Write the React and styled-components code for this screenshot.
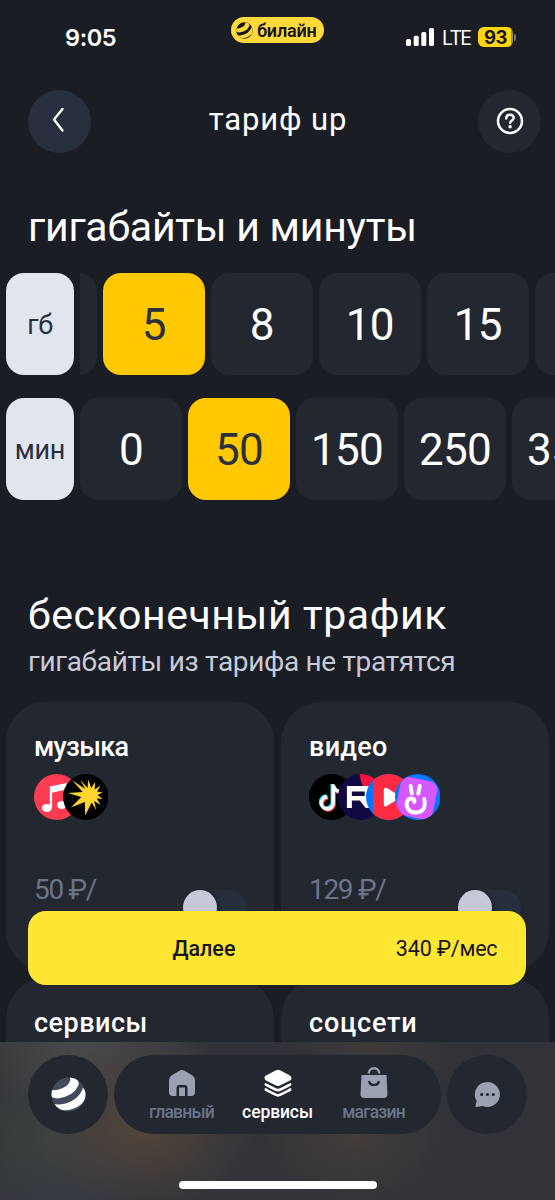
import styled, {createGlobalStyle} from "styled-components";

const GlobalStyle = createGlobalStyle`
    * {
        box-sizing: border-box;
    }

    body {
        margin: 0;
        background-color: #1b1d24;
        font-family: Roboto, "Liberation Sans", sans-serif;
    }

    button {
        border: 0;
        padding: 0;
        font-family: inherit;
    }
`;

const Screen = styled.div`
    position: relative;
    width: 555px;
    height: 1200px;
    overflow: hidden;
    color: #fff;
    background-color: #1b1d24;
`;

const StatusBar = styled.div`
    display: grid;
    grid-template-columns: 231px 93px 1fr;
    height: 89.5px;
    padding-top: 17px;
`;

const Clock = styled.div`
    padding: 6px 0 0 65px;
    font-family: Inter, sans-serif;
    font-size: 23.5px;
    line-height: 29px;
    font-weight: 600;
    letter-spacing: -0.4px;
`;

const OperatorPill = styled.div`
    display: flex;
    align-items: center;
    gap: 4px;
    height: 26px;
    padding-left: 5px;
    border-radius: 13px;
    color: #15171c;
    background-color: #ffd83a;
    font-size: 18px;
    font-weight: 600;
    letter-spacing: -0.2px;
    white-space: nowrap;
`;

const Indicators = styled.div`
    display: flex;
    align-items: flex-start;
    padding: 10px 0 0 82px;
`;

const Network = styled.span`
    width: 28px;
    margin: 0 8px 0 7px;
    font-family: Inter, sans-serif;
    font-size: 19.5px;
    line-height: 22px;
    letter-spacing: -1.7px;
`;

const Battery = styled.span`
    display: flex;
    justify-content: center;
    width: 35px;
    height: 20px;
    border-radius: 6px;
    color: #15171c;
    background: linear-gradient(to right, #ffd60a 94%, #9a8f62 94%);
    font-family: Inter, sans-serif;
    font-size: 18.5px;
    line-height: 20px;
    font-weight: 700;
    letter-spacing: -0.5px;
`;

const BatteryTip = styled.span`
    width: 2px;
    height: 7px;
    margin: 7px 0 0 1px;
    border-radius: 0 2px 2px 0;
    background-color: #777a80;
`;

const Header = styled.header`
    display: flex;
    align-items: center;
    justify-content: space-between;
    height: 63px;
    padding: 0 14px 0 28px;
`;

const RoundButton = styled.button`
    display: flex;
    align-items: center;
    justify-content: center;
    width: 63px;
    height: 63px;
    border-radius: 50%;
    color: #fff;
    background-color: ${p => p.$light ? "#282f3e" : "#232730"};
`;

const Title = styled.h1`
    margin: 0 0 3px -13px;
    font-size: 31px;
    line-height: 36px;
    font-weight: 400;
    letter-spacing: 0.9px;
`;

const Heading = styled.h2`
    margin: ${p => p.$top}px 0 0 28px;
    font-size: 41px;
    line-height: 48px;
    font-weight: 400;
    letter-spacing: ${p => p.$spacing}px;
    white-space: nowrap;
`;

const Subheading = styled.p`
    margin: 5px 0 0 28px;
    font-size: 28px;
    line-height: 36px;
    color: #c6cad8;
    letter-spacing: -0.33px;
`;

const Picker = styled.div`
    display: flex;
    gap: 6px;
    height: 102px;
    margin-top: ${p => p.$top}px;
    padding-left: 6px;
`;

const Unit = styled.div`
    flex: none;
    display: flex;
    align-items: center;
    justify-content: center;
    width: 68px;
    padding-top: 1px;
    border-radius: 18px;
    color: #2a303e;
    background-color: #e1e5ee;
    font-size: 27px;
    letter-spacing: -0.3px;
`;

const Options = styled.div`
    flex: 1;
    display: flex;
    gap: 6px;
    overflow: hidden;
`;

const Option = styled.button`
    flex: none;
    width: 102px;
    margin-left: ${p => p.$shift || 0}px;
    padding-top: 1px;
    border-radius: 18px;
    color: ${p => p.$selected ? "#2a303e" : "#fff"};
    background-color: ${p => p.$selected ? "#ffc800" : "#232730"};
    font-size: 44px;
    letter-spacing: -0.8px;
`;

const Cards = styled.div`
    display: grid;
    grid-template-columns: 268px 268px;
    grid-auto-rows: 269px;
    gap: 7px;
    margin-top: 22px;
    padding-left: 6px;
`;

const Card = styled.section`
    display: flex;
    flex-direction: column;
    padding: 28px 28px 0;
    border-radius: 40px;
    background-color: #232730;
`;

const CardTitle = styled.h3`
    margin: 0;
    font-size: 27px;
    line-height: 34px;
    font-weight: 500;
    letter-spacing: ${p => p.$spacing}px;
`;

const Badges = styled.div`
    display: flex;
    height: 46px;
    margin-top: 10px;

    svg {
        flex: none;
        margin-right: -16.9px;
    }
`;

const CardFooter = styled.div`
    display: flex;
    justify-content: space-between;
    margin-top: 53px;
`;

const Price = styled.span`
    font-size: 28px;
    line-height: 33px;
    color: #6c7489;
    letter-spacing: -1.3px;
`;

const Toggle = styled.span`
    width: 63px;
    height: 35px;
    margin-top: 17px;
    border-radius: 18px;
    background-color: #272e3d;

    &::before {
        content: "";
        display: block;
        width: 34px;
        height: 35px;
        border-radius: 50%;
        background-color: #c6cad8;
        box-shadow: 2px 1px 4px rgba(0, 0, 0, 0.35);
    }
`;

const NextButton = styled.button`
    position: absolute;
    left: 28.4px;
    top: 911px;
    display: grid;
    grid-template-columns: 351px 1fr;
    align-items: center;
    width: 498px;
    height: 74px;
    padding-right: 29px;
    border-radius: 18px;
    color: #15171c;
    background-color: #ffe633;
    font-size: 21.5px;
`;

const NextLabel = styled.span`
    font-weight: 500;
`;

const Total = styled.span`
    text-align: right;
    white-space: nowrap;
    letter-spacing: -0.2px;
`;

const TabBar = styled.nav`
    position: absolute;
    left: 0;
    right: 0;
    bottom: 0;
    display: flex;
    flex-direction: column;
    align-items: center;
    height: 158px;
    padding-top: 13px;
    background:
        radial-gradient(ellipse 110px 90px at 145px 82px, #54463b, transparent),
        radial-gradient(ellipse 130px 70px at 80px 0, #4b4b4b, transparent),
        radial-gradient(ellipse 100px 90px at 50px 95px, #3b4241, transparent),
        radial-gradient(ellipse 90px 70px at 355px 92px, #443d39, transparent),
        radial-gradient(ellipse 80px 60px at 370px 0, #3e3a39, transparent),
        radial-gradient(ellipse 90px 60px at 75px 158px, #333744, transparent),
        #323338;
`;

const TabRow = styled.div`
    display: flex;
    gap: 6px;
    height: 79px;
`;

const TabCircle = styled.button`
    display: flex;
    align-items: center;
    justify-content: center;
    width: 80px;
    height: 79px;
    border-radius: 50%;
    background-color: #232730;
`;

const TabGroup = styled.div`
    display: flex;
    justify-content: center;
    width: 327px;
    border-radius: 40px;
    background-color: #232730;
`;

const Tab = styled.button`
    display: flex;
    flex-direction: column;
    align-items: center;
    width: 96px;
    padding-top: 13px;
    color: ${p => p.$active ? "#fff" : "#6c7489"};
    background: none;
    font-size: 17.5px;
    line-height: 21px;
    font-weight: 500;
    letter-spacing: ${p => p.$active ? -0.1 : -0.8}px;

    svg {
        margin-bottom: 4px;
        color: ${p => p.$active ? "#fff" : "#9ba1b2"};
    }
`;

const HomeIndicator = styled.div`
    width: 198px;
    height: 8px;
    margin-top: 47px;
    border-radius: 4px;
    background-color: #fff;
`;

const BeeLogo = ({size, ball, stripe}) => (
    <svg width={size} height={size} viewBox="0 0 36 36">
        <defs>
            <clipPath id={`ball-${size}`}><circle cx="18" cy="18" r="17.5"/></clipPath>
        </defs>
        <g clipPath={`url(#ball-${size})`}>
            <rect width="36" height="36" fill={ball}/>
            <path d="M0 13Q3 14 7 13Q19 10 20 2L19 0L25 1Q30 5 28 9Q23 20 7 22Q3 22 0 20Z" fill={stripe}/>
            <path d="M1 27Q5 29 11 28Q28 25 33 11L37 17Q35 29 22 33Q13 36 5 32Z" fill={stripe}/>
        </g>
    </svg>
);

const SignalIcon = () => (
    <svg width="29" height="19" viewBox="0 0 29 19" fill="#fff">
        <rect x="0" y="12" width="5" height="7" rx="1.5"/>
        <rect x="7.7" y="8.7" width="5" height="10.3" rx="1.5"/>
        <rect x="15.3" y="5" width="5" height="14" rx="1.5"/>
        <rect x="23" y="1" width="5" height="18" rx="1.5"/>
    </svg>
);

const BackIcon = () => (
    <svg width="16" height="28" viewBox="0 0 16 28" fill="none" stroke="currentColor" strokeWidth="2.4"
         strokeLinecap="round" strokeLinejoin="round">
        <path d="M10.5 2L2 12.5L10.5 23.5"/>
    </svg>
);

const HelpIcon = () => (
    <svg width="28" height="28" viewBox="0 0 28 28" fill="none" stroke="currentColor" strokeWidth="2.5"
         strokeLinecap="round">
        <circle cx="14" cy="14" r="12"/>
        <path d="M10.2 11.5C10.2 6.3 18 6.7 17.7 11C17.5 13.6 14.1 13.4 14.1 16"/>
        <circle cx="14.1" cy="19.8" r="1.7" fill="currentColor" stroke="none"/>
    </svg>
);

const Badge = ({fill, children, name}) => (
    <svg width="45.5" height="46" viewBox="0 0 46 46" preserveAspectRatio="none">
        <defs>
            <clipPath id={`badge-${name}`}><circle cx="23" cy="23" r="23"/></clipPath>
        </defs>
        <g clipPath={`url(#badge-${name})`}>
            <rect width="46" height="46" fill={fill}/>
            {children}
        </g>
    </svg>
);

const AppleMusic = () => (
    <Badge name="music" fill="#fc3c53">
        <path d="M16 12.5L33 9V31H30.5V16L18.3 18.8V34H16Z" fill="#fff"/>
        <ellipse cx="13" cy="34" rx="5" ry="4" fill="#fff"/>
        <ellipse cx="28" cy="31" rx="4.7" ry="4" fill="#fff"/>
    </Badge>
);

const Zvuk = () => (
    <Badge name="zvuk" fill="#000">
        <path
            d="M5 19L20 18L9.5 6.5L22.5 15L17.5 6L24.8 14L25.5 5.5L28.5 14L32.5 8L32 15.500L38 11.5L34.5 17.5L40 18.5L35 21L40 25L34 24.5L38 31L31.5 27L33.5 36L29 28.5L22.5 41.5L22 28L8 33.5L18.5 23Z"
            fill="#ffd52e"/>
    </Badge>
);

const TikTok = () => (
    <Badge name="tiktok" fill="#000">
        <g fill="none" strokeWidth="3.4">
            <path d="M23.5 10V27.5A6 6 0 1 1 17.5 22M23.5 11Q24.5 16 30 17" stroke="#25f4ee"/>
            <path d="M25.5 12V29A6 6 0 1 1 19.5 24M25.5 12Q26 18 32 19" stroke="#fe2c55"/>
            <path d="M24.5 10.5V28.3A6 6 0 1 1 18.5 23M24.5 11Q25.5 16.5 31.5 18" stroke="#fff"/>
        </g>
    </Badge>
);

const Rutube = () => (
    <Badge name="rutube" fill="#100943">
        <path d="M22 0H46V23Q24 23 22 0Z" fill="#f41240"/>
        <path d="M9 12H29Q33 12 33 16V22Q33 26 29 26.5L34 34H28L22 26.500H14V34H9ZM14 17.500V22H27V17.500Z" fill="#fff"
              fillRule="evenodd"/>
    </Badge>
);

const VkVideo = () => (
    <Badge name="vkvideo" fill="#0077ff">
        <rect x="7" y="-2" width="50" height="50" rx="9" fill="#ff2b42"/>
        <path d="M18 16Q18 13 21 14L31 20Q34 23 31 26L21 32Q18 34 18 30Z" fill="#fff"/>
    </Badge>
);

const VkClips = () => (
    <Badge name="clips" fill="#0077ff">
        <rect x="3" y="5" width="38" height="39" rx="9" transform="rotate(12 23 24)" fill="#d457ff"/>
        <g fill="none" stroke="#fff" strokeWidth="4" strokeLinecap="round">
            <path d="M15.8 12L17 19.5M25 12L23.5 19.5"/>
            <path d="M19.5 28Q20.5 24.5 16.5 24.5C11 25 10.5 32 14 36C18 40 27 39.5 29.5 33.5Q31 29 29.5 25"/>
        </g>
    </Badge>
);

const HomeIcon = () => (
    <svg width="30" height="30" viewBox="0 0 30 30" fill="currentColor">
        <path
            d="M12.5 2.7Q15 1.2 17.5 2.7L25.5 7.5Q28 9 28 12V24Q28 28 24 28H20.5V20Q20.5 17 17.5 17H12.5Q9.5 17 9.5 20V28H6Q2 28 2 24V12Q2 9 4.5 7.5Z"/>
        <rect x="12" y="19.5" width="6" height="8.5"/>
    </svg>
);

const LayersIcon = () => (
    <svg width="30" height="30" viewBox="0 0 30 30" fill="currentColor">
        <path
            d="M12.5 2.5Q15 1 17.5 2.5L26.5 7.2Q28.5 8.5 28.5 10.5T26.5 12.7L17.5 17.3Q15 18.6 12.5 17.3L3.5 12.7Q1.5 11.5 1.5 10V9.5Q1.5 8.2 3.5 7.2Z"/>
        <g fill="none" stroke="currentColor" strokeWidth="2.6" strokeLinecap="round">
            <path d="M2.8 16.3Q3.5 17 4.5 17.5L12.5 21.5Q15 22.8 17.5 21.5L25.5 17.5Q26.5 17 27.2 16.3"/>
            <path d="M2.8 21.5Q3.5 22.2 4.5 22.7L12.5 26.7Q15 28 17.5 26.7L25.5 22.7Q26.5 22.2 27.2 21.5"/>
        </g>
    </svg>
);

const BagIcon = () => (
    <svg width="30" height="30" viewBox="0 -1 30 30" overflow="visible">
        <path d="M9.7 4.5A5.3 5.3 0 0 1 20.3 4.5" fill="none" stroke="currentColor" strokeWidth="2.4"/>
        <path d="M2.5 6H27.5L28.5 25Q28.5 29 24.5 29H5.5Q1.5 29 1.5 25Z" fill="currentColor"/>
        <path d="M10 12Q10.5 16 15 16Q19.5 16 20 12" fill="none" stroke="#232730" strokeWidth="2.2"/>
    </svg>
);

const ChatIcon = () => (
    <svg width="27" height="27" viewBox="0 0 27 27">
        <path d="M13.5 1A12.5 12.5 0 1 1 8.5 25L2.5 26Q1 26 1.5 24.5L2.7 20A12.5 12.5 0 0 1 13.5 1Z"
              fill="#9ba1b2"/>
        <g fill="#232730">
            <circle cx="7.7" cy="13.5" r="1.6"/>
            <circle cx="13.5" cy="13.5" r="1.6"/>
            <circle cx="19.3" cy="13.5" r="1.6"/>
        </g>
    </svg>
);

const cards = [
    {title: "музыка", spacing: -0.7, price: "50 ₽/", badges: [AppleMusic, Zvuk]},
    {title: "видео", spacing: 0.3, price: "129 ₽/", badges: [TikTok, Rutube, VkVideo, VkClips]},
    {title: "сервисы", spacing: 0.5, badges: []},
    {title: "соцсети", spacing: 0.8, badges: []},
];

const tabs = [
    {name: "главный", icon: HomeIcon},
    {name: "сервисы", icon: LayersIcon, active: true},
    {name: "магазин", icon: BagIcon},
];

const App = () => {
    return (
        <>
            <GlobalStyle/>
            <Screen>
                <StatusBar>
                    <Clock>9:05</Clock>
                    <OperatorPill>
                        <BeeLogo size={17} ball="#15171c" stripe="#ffd83a"/>
                        билайн
                    </OperatorPill>
                    <Indicators>
                        <SignalIcon/>
                        <Network>LTE</Network>
                        <Battery>93</Battery>
                        <BatteryTip/>
                    </Indicators>
                </StatusBar>
                <Header>
                    <RoundButton $light><BackIcon/></RoundButton>
                    <Title>тариф up</Title>
                    <RoundButton><HelpIcon/></RoundButton>
                </Header>
                <Heading $top={50.5} $spacing={-0.25}>гигабайты и минуты</Heading>
                <Picker $top={22}>
                    <Unit>гб</Unit>
                    <Options>
                        <Option $shift={-85.3}/>
                        <Option $selected>5</Option>
                        <Option>8</Option>
                        <Option>10</Option>
                        <Option>15</Option>
                        <Option/>
                    </Options>
                </Picker>
                <Picker $top={23}>
                    <Unit>мин</Unit>
                    <Options>
                        <Option>0</Option>
                        <Option $selected>50</Option>
                        <Option>150</Option>
                        <Option>250</Option>
                        <Option>350</Option>
                    </Options>
                </Picker>
                <Heading $top={91} $spacing={0.58}>бесконечный трафик</Heading>
                <Subheading>гигабайты из тарифа не тратятся</Subheading>
                <Cards>
                    {cards.map(card => (
                        <Card key={card.title}>
                            <CardTitle $spacing={card.spacing}>{card.title}</CardTitle>
                            <Badges>
                                {card.badges.map((Icon, index) => <Icon key={index}/>)}
                            </Badges>
                            {card.price && (
                                <CardFooter>
                                    <Price>{card.price}</Price>
                                    <Toggle/>
                                </CardFooter>
                            )}
                        </Card>
                    ))}
                </Cards>
                <NextButton>
                    <NextLabel>Далее</NextLabel>
                    <Total>340 ₽/мес</Total>
                </NextButton>
                <TabBar>
                    <TabRow>
                        <TabCircle><BeeLogo size={35} ball="#434a5a" stripe="#fff"/></TabCircle>
                        <TabGroup>
                            {tabs.map(({name, icon: Icon, active}) => (
                                <Tab key={name} $active={active}>
                                    <Icon/>
                                    {name}
                                </Tab>
                            ))}
                        </TabGroup>
                        <TabCircle><ChatIcon/></TabCircle>
                    </TabRow>
                    <HomeIndicator/>
                </TabBar>
            </Screen>
        </>
    )
}

export default App;
